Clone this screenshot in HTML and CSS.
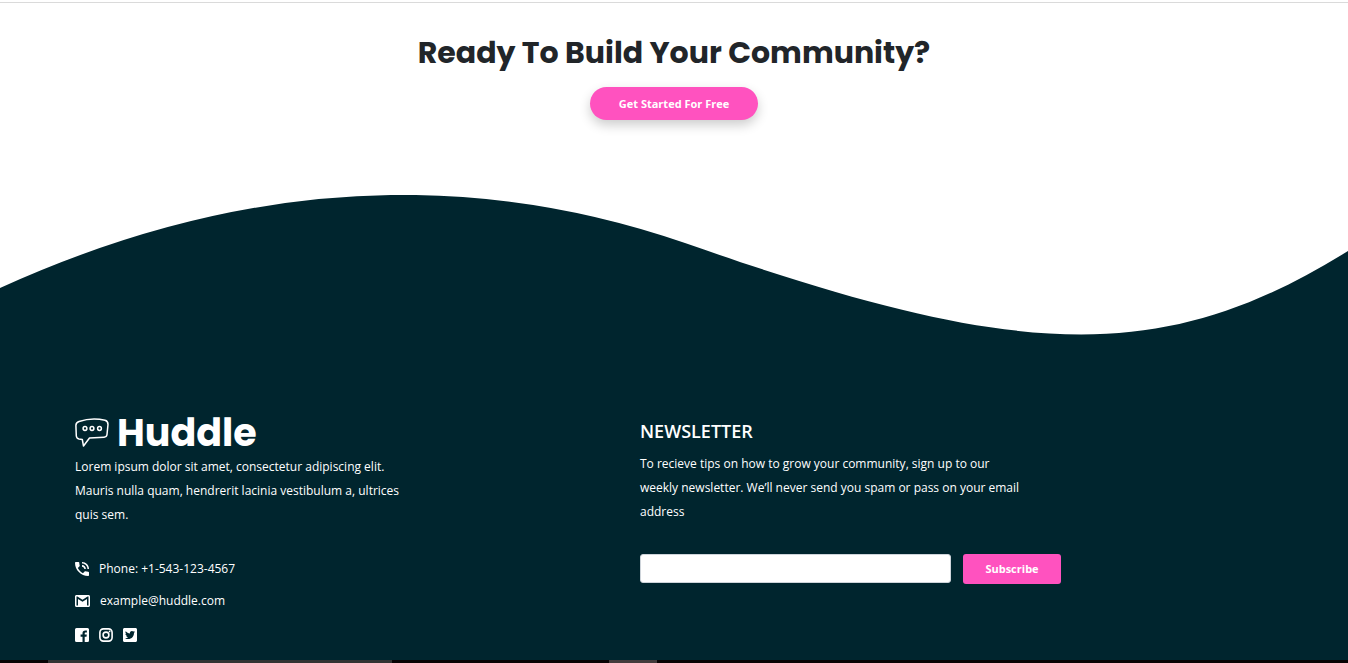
FILE: index.html
```
<!DOCTYPE html>
<html lang="en">
<head>
<meta charset="utf-8">
<meta name="viewport" content="width=device-width, initial-scale=1">
<title>Huddle</title>
<link rel="stylesheet" href="styles.css">
</head>
<body>
<section class="cta">
  <h2 class="cta-title">Ready To Build Your Community?</h2>
  <button class="cta-button" type="button">Get Started For Free</button>
</section>
<svg class="wave" viewBox="0 0 1348 140" preserveAspectRatio="none" aria-hidden="true">
  <path d="M0 93Q352-67 685 48C1020 166 1163 171 1348 56V140H0Z"/>
</svg>
<footer class="footer">
  <div class="about">
    <div class="logo">
      <svg class="logo-mark" viewBox="0 0 34 30" aria-hidden="true">
        <path d="M4 3.5Q17-.8 30 2.3Q33 3 33 6.5L32 16.5Q31.700 19 29 19.200L14.500 20L8.500 28L7.300 21.500L4 21Q1.600 20.500 1.300 18L.9 7.500Q.9 4.500 4 3.500Z"/>
        <circle cx="10" cy="10.500" r="1.900"/><circle cx="17" cy="10.500" r="1.900"/><circle cx="24.500" cy="10.500" r="1.900"/>
      </svg>
      <span class="logo-name">Huddle</span>
    </div>
    <p class="text">Lorem ipsum dolor sit amet, consectetur adipiscing elit. Mauris nulla quam, hendrerit lacinia vestibulum a, ultrices quis sem.</p>
    <ul class="contacts">
      <li class="contact">
        <svg class="icon" viewBox="3 3 18 18" aria-hidden="true"><path d="M20 15.500c-1.250 0-2.450-.2-3.570-.57-.1-.03-.21-.05-.31-.05-.26 0-.51.1-.71.29l-2.200 2.200c-2.830-1.440-5.150-3.750-6.590-6.590l2.200-2.200c.28-.28.36-.67.25-1.020C8.700 6.450 8.500 5.250 8.500 4c0-.55-.45-1-1-1H4c-.55 0-1 .45-1 1 0 9.390 7.610 17 17 17 .55 0 1-.45 1-1v-3.500c0-.55-.45-1-1-1zM19 12h2c0-4.970-4.030-9-9-9v2c3.870 0 7 3.130 7 7zm-4 0h2c0-2.760-2.240-5-5-5v2c1.660 0 3 1.340 3 3z"/></svg>
        <span>Phone: +1-543-123-4567</span>
      </li>
      <li class="contact contact-mail">
        <svg class="icon" viewBox="2 3 20 18" aria-hidden="true"><path d="M20 4H4c-1.100 0-2 .9-2 2v12c0 1.100.9 2 2 2h16c1.100 0 2-.9 2-2V6c0-1.100-.9-2-2-2zm0 14h-2V9.200l-6 3.800-6-3.800V18H4V6h1.200l6.800 4.200L18.800 6H20v12z"/></svg>
        <span>example@huddle.com</span>
      </li>
    </ul>
    <nav class="social">
      <a class="social-link" href="#" aria-label="Facebook"><svg viewBox="0 0 14 14"><path fill-rule="evenodd" d="M1.500 0h11A1.500 1.500 0 0 1 14 1.500v11a1.500 1.500 0 0 1-1.500 1.500H9.700V8.700h1.800l.3-2.100H9.700V5.400c0-.7.300-1 1-1h1.200V2.500l-1.600-.1C8.500 2.400 7.500 3.400 7.500 5.200v1.400H5.600v2.100h1.900V14h-6A1.500 1.500 0 0 1 0 12.500v-11A1.500 1.500 0 0 1 1.500 0Z"/></svg></a>
      <a class="social-link" href="#" aria-label="Instagram"><svg class="line" viewBox="0 0 14 14"><rect x=".9" y=".9" width="12.200" height="12.200" rx="3.500"/><circle cx="7" cy="7" r="2.900"/><circle class="dot" cx="10.600" cy="3.400" r=".9"/></svg></a>
      <a class="social-link" href="#" aria-label="Twitter"><svg viewBox="0 0 448 448"><path d="M400 0H48C21.500 0 0 21.500 0 48v352c0 26.500 21.500 48 48 48h352c26.500 0 48-21.500 48-48V48c0-26.500-21.500-48-48-48zm-48.900 158.800c.2 2.800.2 5.700.2 8.500 0 86.700-66 186.600-186.600 186.600-37.200 0-71.700-10.800-100.700-29.400 5.300.6 10.400.8 15.800.8 30.700 0 58.900-10.400 81.400-28-28.800-.6-53-19.500-61.300-45.500 10.100 1.500 19.200 1.500 29.600-1.200-30-6.100-52.500-32.500-52.500-64.400v-.8c8.700 4.900 18.900 7.900 29.600 8.300a65.447 65.447 0 0 1-29.200-54.600c0-12.200 3.200-23.400 8.900-33.100 32.300 39.800 80.800 65.800 135.200 68.600-9.300-44.500 24-80.600 64-80.600 18.900 0 35.900 7.900 47.900 20.700 14.800-2.800 29-8.300 41.600-15.800-4.900 15.200-15.200 28-28.800 36.100 13.200-1.400 26-5.100 37.800-10.200-8.900 13.100-20.100 24.700-32.900 34z"/></svg></a>
    </nav>
  </div>
  <div class="newsletter">
    <h3 class="newsletter-title">NEWSLETTER</h3>
    <p class="text">To recieve tips on how to grow your community, sign up to our weekly newsletter. We’ll never send you spam or pass on your email address</p>
    <form class="signup">
      <input class="email" type="email" aria-label="Email address">
      <button class="subscribe" type="button">Subscribe</button>
    </form>
  </div>
</footer>
<div class="strip"><span class="strip-wide"></span><span class="strip-small"></span></div>
</body>
</html>
```
FILE: styles.css
```
* { box-sizing: border-box; }
body {
  margin: 0;
  padding-top: 2px;
  background: #fff;
  font-family: "Open Sans", "Noto Sans", sans-serif;
  font-size: 12px;
}
.cta {
  display: flex;
  flex-direction: column;
  align-items: center;
  gap: 13px;
  padding: 29px 16px 75px;
  border-top: 1px solid #dadada;
}
.cta-title {
  margin: 0;
  color: #212529;
  font-family: Poppins, Inter, sans-serif;
  font-size: 30px;
  font-weight: 700;
  line-height: 42px;
  text-align: center;
}
.cta-button {
  height: 33px;
  padding: 0 29px 1px;
  border: 0;
  border-radius: 17px;
  background: #ff52bf;
  box-shadow: 0 5px 12px rgba(0, 0, 0, .2);
  color: #fff;
  font: 700 11px "Open Sans", sans-serif;
}
.wave {
  display: block;
  width: 100%;
  height: 140px;
  fill: #00252e;
}
.footer {
  display: grid;
  grid-template-columns: 565px 1fr;
  padding: 78px 75px 18px;
  background: #00252e;
  color: #fff;
}
.about .text { max-width: 340px; }
.newsletter .text { max-width: 385px; }
.logo {
  display: flex;
  align-items: center;
  gap: 8px;
  height: 40px;
  margin-bottom: 2px;
}
.logo-mark {
  width: 34px;
  height: 30px;
  fill: none;
  stroke: #fff;
  stroke-width: 1.5;
  stroke-linejoin: round;
}
.logo-name {
  font: 700 38px/40px Poppins, Inter, sans-serif;
}
.text {
  margin: 0;
  line-height: 24px;
}
.contacts {
  display: grid;
  gap: 8px;
  margin: 30px 0 0;
  padding: 0;
  list-style: none;
  line-height: 24px;
}
.contact {
  display: flex;
  align-items: center;
  gap: 10px;
}
.icon {
  width: 14px;
  height: 14px;
  fill: #fff;
}
.contact-mail .icon { width: 15px; }
.social {
  display: flex;
  gap: 10px;
  margin-top: 15px;
}
.social-link svg {
  display: block;
  width: 14px;
  height: 14px;
  fill: #fff;
}
.social-link .line {
  fill: none;
  stroke: #fff;
  stroke-width: 1.6;
}
.social-link .dot { fill: #fff; stroke: none; }
.newsletter-title {
  margin: 6px 0 9px;
  font-size: 18px;
  font-weight: 600;
  line-height: 24px;
}
.signup {
  display: flex;
  gap: 12px;
  margin-top: 30px;
}
.email {
  width: 311px;
  height: 29px;
  padding: 4px 8px;
  border: 1px solid #ced4da;
  border-radius: 3px;
  background: #fff;
}
.subscribe {
  width: 98px;
  height: 30px;
  padding: 0 0 1px;
  border: 0;
  border-radius: 3px;
  background: #ff52bf;
  color: #fff;
  font: 700 11px "Open Sans", sans-serif;
}
.strip {
  display: flex;
  gap: 217px;
  height: 3px;
  padding-left: 48px;
  background: #080304;
}
.strip-wide { width: 344px; background: #333; }
.strip-small { width: 48px; background: #433b3c; }
```
